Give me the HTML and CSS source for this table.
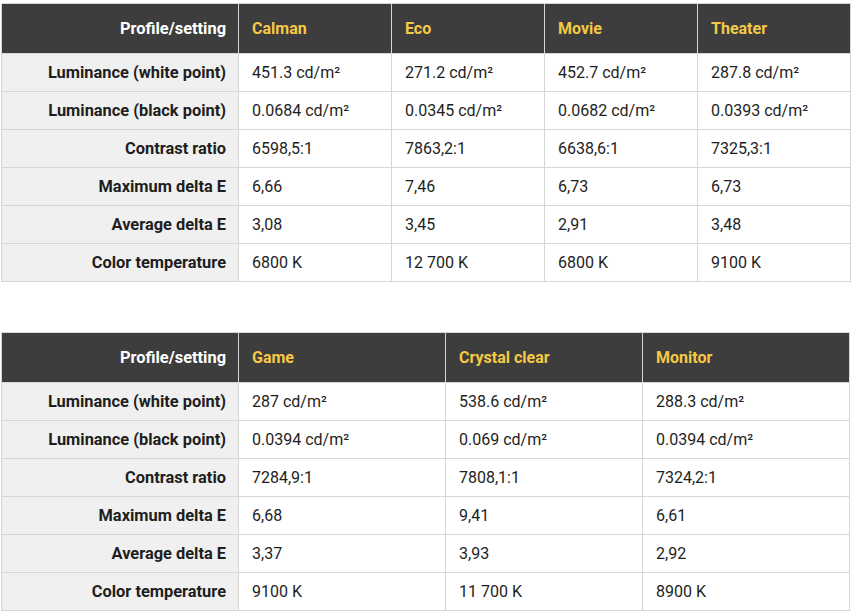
FILE: index.html
```html
<!DOCTYPE html>
<html>
<head>
<meta charset="utf-8">
<link rel="stylesheet" href="styles.css">
</head>
<body>
<div class="page">
<table class="spec spec-a">
  <colgroup><col class="c-label"><col class="c-a"><col class="c-a"><col class="c-a"><col class="c-a"></colgroup>
  <thead>
    <tr><th class="label">Profile/setting</th><th>Calman</th><th>Eco</th><th>Movie</th><th>Theater</th></tr>
  </thead>
  <tbody>
    <tr><th class="label">Luminance (white point)</th><td>451.3 cd/m²</td><td>271.2 cd/m²</td><td>452.7 cd/m²</td><td>287.8 cd/m²</td></tr>
    <tr><th class="label">Luminance (black point)</th><td>0.0684 cd/m²</td><td>0.0345 cd/m²</td><td>0.0682 cd/m²</td><td>0.0393 cd/m²</td></tr>
    <tr><th class="label">Contrast ratio</th><td>6598,5:1</td><td>7863,2:1</td><td>6638,6:1</td><td>7325,3:1</td></tr>
    <tr><th class="label">Maximum delta E</th><td>6,66</td><td>7,46</td><td>6,73</td><td>6,73</td></tr>
    <tr><th class="label">Average delta E</th><td>3,08</td><td>3,45</td><td>2,91</td><td>3,48</td></tr>
    <tr><th class="label">Color temperature</th><td>6800 K</td><td>12 700 K</td><td>6800 K</td><td>9100 K</td></tr>
  </tbody>
</table>

<table class="spec spec-b">
  <colgroup><col class="c-label"><col class="c-b1"><col class="c-b2"><col></colgroup>
  <thead>
    <tr><th class="label">Profile/setting</th><th>Game</th><th>Crystal clear</th><th>Monitor</th></tr>
  </thead>
  <tbody>
    <tr><th class="label">Luminance (white point)</th><td>287 cd/m²</td><td>538.6 cd/m²</td><td>288.3 cd/m²</td></tr>
    <tr><th class="label">Luminance (black point)</th><td>0.0394 cd/m²</td><td>0.069 cd/m²</td><td>0.0394 cd/m²</td></tr>
    <tr><th class="label">Contrast ratio</th><td>7284,9:1</td><td>7808,1:1</td><td>7324,2:1</td></tr>
    <tr><th class="label">Maximum delta E</th><td>6,68</td><td>9,41</td><td>6,61</td></tr>
    <tr><th class="label">Average delta E</th><td>3,37</td><td>3,93</td><td>2,92</td></tr>
    <tr><th class="label">Color temperature</th><td>9100 K</td><td>11 700 K</td><td>8900 K</td></tr>
  </tbody>
</table>
</div>
</body>
</html>
```

FILE: styles.css
```css
html, body {
  margin: 0;
  padding: 0;
  background: #ffffff;
}

.page {
  padding: 3px 0 0 1px;
  display: flex;
  flex-direction: column;
  gap: 50px;
  font-family: Roboto, "Liberation Sans", sans-serif;
  font-size: 16px;
  color: #1e1e1e;
}

.spec {
  width: 849px;
  border-collapse: collapse;
  table-layout: fixed;
}

.spec th,
.spec td {
  border: 1px solid #d6d6d6;
  padding: 0 12px 0 13px;
  text-align: left;
  vertical-align: middle;
  font-weight: 400;
  white-space: nowrap;
}

.spec thead th {
  height: 49px;
  background: #3d3d3d;
  color: #f6c945;
  font-weight: 700;
  border-color: #d6d6d6;
}

.spec tbody td,
.spec tbody th {
  height: 37px;
}

.spec .label {
  text-align: right;
  font-weight: 700;
  font-size: 16.4px;
  background: #f0f0f0;
  color: #1e1e1e;
  padding-right: 12px;
}

.spec thead .label {
  background: #3d3d3d;
  color: #ffffff;
}

.c-label { width: 237px; }
.c-a { width: 153px; }
.c-b1 { width: 207px; }
.c-b2 { width: 197px; }
```
